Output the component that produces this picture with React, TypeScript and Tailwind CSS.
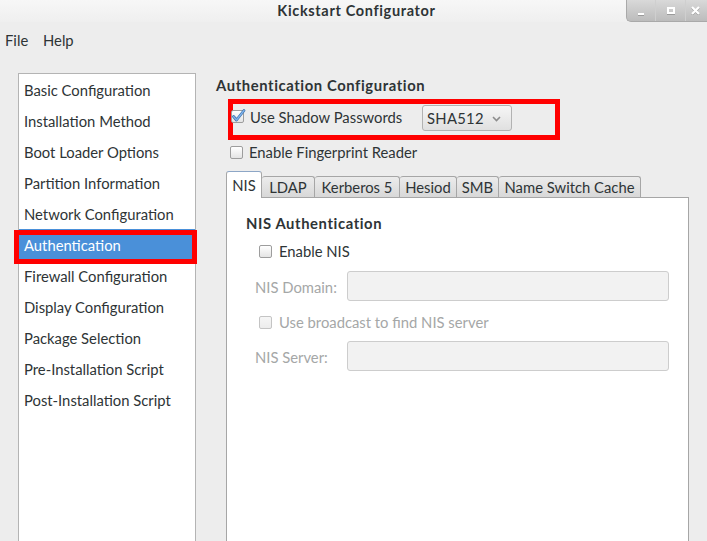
import React from "react";

const pages = [
  "Basic Configuration",
  "Installation Method",
  "Boot Loader Options",
  "Partition Information",
  "Network Configuration",
  "Authentication",
  "Firewall Configuration",
  "Display Configuration",
  "Package Selection",
  "Pre-Installation Script",
  "Post-Installation Script",
];

const tabs: { label: string; w: string }[] = [
  { label: "NIS", w: "w-[36px]" },
  { label: "LDAP", w: "w-[53px]" },
  { label: "Kerberos 5", w: "w-[85px]" },
  { label: "Hesiod", w: "w-[57px]" },
  { label: "SMB", w: "w-[42px]" },
  { label: "Name Switch Cache", w: "w-[142px]" },
];

function CheckBox({ checked = false, disabled = false }: { checked?: boolean; disabled?: boolean }) {
  return (
    <div
      className={
        "relative w-[13px] h-[13px] shrink-0 rounded-[2px] border bg-linear-to-b " +
        (disabled
          ? "border-[#c4c4c4] from-[#f6f6f6] to-[#ececec]"
          : "border-[#9d9d9d] from-white to-[#e4e4e4]")
      }
    >
      {checked && (
        <svg
          className="absolute left-[-1px] top-[-3px]"
          width="15"
          height="15"
          viewBox="0 0 15 15"
        >
          <path
            d="M2.5 8.5 L5.5 12 L13 2.5"
            fill="none"
            stroke="#3a6ea8"
            strokeWidth="2.8"
            strokeLinecap="round"
            strokeLinejoin="round"
          />
          <path
            d="M2.5 8.5 L5.5 12 L13 2.5"
            fill="none"
            stroke="#7eb3ec"
            strokeWidth="1.4"
            strokeLinecap="round"
            strokeLinejoin="round"
          />
        </svg>
      )}
    </div>
  );
}

function WindowButtons() {
  return (
    <div className="flex h-[22px] w-[81px] rounded-bl-[5px] border-l border-b border-[#a9a9a9] bg-linear-to-b from-[#d9d9d9] to-[#bcbcbc] overflow-hidden">
      <div className="w-[29px] flex items-center justify-center border-r border-[#cfcfcf]">
        <div className="mt-[7px] w-[6px] h-[2px] bg-white shadow-[0_1px_0_#9a9a9a]" />
      </div>
      <div className="w-[30px] flex items-center justify-center border-r border-[#cfcfcf]">
        <div className="w-[8px] h-[7px] border-2 border-white shadow-[0_1px_0_#9a9a9a]" />
      </div>
      <div className="flex-1 flex items-center justify-center pr-[2px]">
        <svg width="9" height="9" viewBox="0 0 9 9">
          <path d="M1 1 L8 8 M8 1 L1 8" stroke="#9a9a9a" strokeWidth="2.2" transform="translate(0 0.8)" />
          <path d="M1 1 L8 8 M8 1 L1 8" stroke="white" strokeWidth="2.2" />
        </svg>
      </div>
    </div>
  );
}

export default function App() {
  return (
    <div className="w-[707px] h-[541px] overflow-hidden bg-[#ededed] flex flex-col font-['Lato','Noto_Sans',sans-serif] text-[14.8px] text-[#2e3436]">
      {/* title bar */}
      <div className="h-[22px] shrink-0 grid grid-cols-[1fr_auto_1fr] bg-linear-to-b from-[#f7f7f7] to-[#efefef]">
        <div />
        <div className="pl-[6px] leading-[21px] font-bold tracking-[0.65px] text-[14.5px] text-[#2e3436]">
          Kickstart Configurator
        </div>
        <div className="flex justify-end">
          <WindowButtons />
        </div>
      </div>

      {/* menu bar */}
      <div className="h-[36px] shrink-0 flex items-center pl-[5px] pt-[1px]">
        <span className="w-[38px]">File</span>
        <span>Help</span>
      </div>

      {/* body */}
      <div className="flex-1 flex pl-[18px] pt-[15px]">
        {/* page list */}
        <div className="w-[178px] h-[480px] shrink-0 border border-[#b4b4b4] bg-white">
          {pages.map((p) => {
            const sel = p === "Authentication";
            return (
              <div
                key={p}
                className={
                  "relative h-[31px] flex items-center pl-[5px] pt-[1px] whitespace-nowrap " +
                  (sel ? "bg-[#4a90d9] text-white" : "")
                }
              >
                {p}
                {sel && (
                  <div className="absolute left-[-5px] top-[1px] w-[183px] h-[34px] border-[5px] border-[#ff0000]" />
                )}
              </div>
            );
          })}
        </div>

        {/* page content */}
        <div className="ml-[20px] flex-1 flex flex-col">
          <div className="mt-[3px] h-[18px] leading-[18px] font-bold tracking-[0.6px] whitespace-nowrap">
            Authentication Configuration
          </div>

          {/* shadow passwords */}
          <div className="relative mt-[5px] h-[41px] flex items-start">
            <div className="absolute left-[12px] top-0 w-[332px] h-[41px] border-[5px] border-[#ff0000]" />
            <div className="relative ml-[15px] mt-[11px]">
              <CheckBox checked />
            </div>
            <div className="ml-[6px] mt-[9px] w-[172px] leading-[18px] whitespace-nowrap">Use Shadow Passwords</div>
            <div className="relative mt-[6px] w-[90px] h-[26px] flex items-center justify-between pl-[4px] pr-[10px] pt-[1px] rounded-[3px] border border-[#b2b2b2] bg-linear-to-b from-[#f6f6f6] to-[#e0e0e0]">
              <span className="tracking-[0.3px]">SHA512</span>
              <svg width="9" height="6" viewBox="0 0 9 6">
                <path d="M1 1 L4.5 4.5 L8 1" fill="none" stroke="#8c8c8c" strokeWidth="1.6" />
              </svg>
            </div>
          </div>

          {/* fingerprint */}
          <div className="h-[24px] flex items-center pl-[14px]">
            <CheckBox />
            <span className="ml-[6px] pt-[1px]">Enable Fingerprint Reader</span>
          </div>

          {/* tabs */}
          <div className="mt-[7px] ml-[10px] h-[26px] flex items-end">
            {tabs.map((t, i) =>
              i === 0 ? (
                <div
                  key={t.label}
                  className={
                    t.w +
                    " relative z-10 h-[27px] -mb-px flex items-center justify-center bg-white border-t border-l border-r border-[#a6a6a6] border-t-[#8da6c6] rounded-t-[3px]"
                  }
                >
                  {t.label}
                </div>
              ) : (
                <div
                  key={t.label}
                  className={
                    t.w +
                    " h-[21px] flex items-center justify-center pt-[1px] border-t border-r border-[#a6a6a6] rounded-t-[3px] bg-linear-to-b from-[#ececec] to-[#d8d8d8] whitespace-nowrap"
                  }
                >
                  {t.label}
                </div>
              )
            )}
          </div>

          {/* NIS panel */}
          <div className="ml-[10px] w-[463px] h-[360px] shrink-0 border border-[#a6a6a6] bg-white flex flex-col">
            <div className="mt-[16px] ml-[19px] h-[18px] leading-[18px] font-bold tracking-[0.6px]">NIS Authentication</div>

            <div className="mt-[7px] h-[24px] flex items-center pl-[32px]">
              <CheckBox />
              <span className="ml-[7px] pt-[1px]">Enable NIS</span>
            </div>

            <div className="mt-[8px] h-[30px] flex items-center pl-[28px] text-[#a5a7a7]">
              <span className="w-[92px] pt-[2px]">NIS Domain:</span>
              <div className="w-[322px] h-[30px] rounded-[3px] border border-[#cdcdcd] bg-[#f2f2f2]" />
            </div>

            <div className="mt-[9px] h-[24px] flex items-center pl-[32px] text-[#a5a7a7]">
              <CheckBox disabled />
              <span className="ml-[7px] pt-[1px]">Use broadcast to find NIS server</span>
            </div>

            <div className="mt-[7px] h-[30px] flex items-center pl-[28px] text-[#a5a7a7]">
              <span className="w-[92px] pt-[2px]">NIS Server:</span>
              <div className="w-[322px] h-[30px] rounded-[3px] border border-[#cdcdcd] bg-[#f2f2f2]" />
            </div>
          </div>
        </div>
      </div>
    </div>
  );
}
